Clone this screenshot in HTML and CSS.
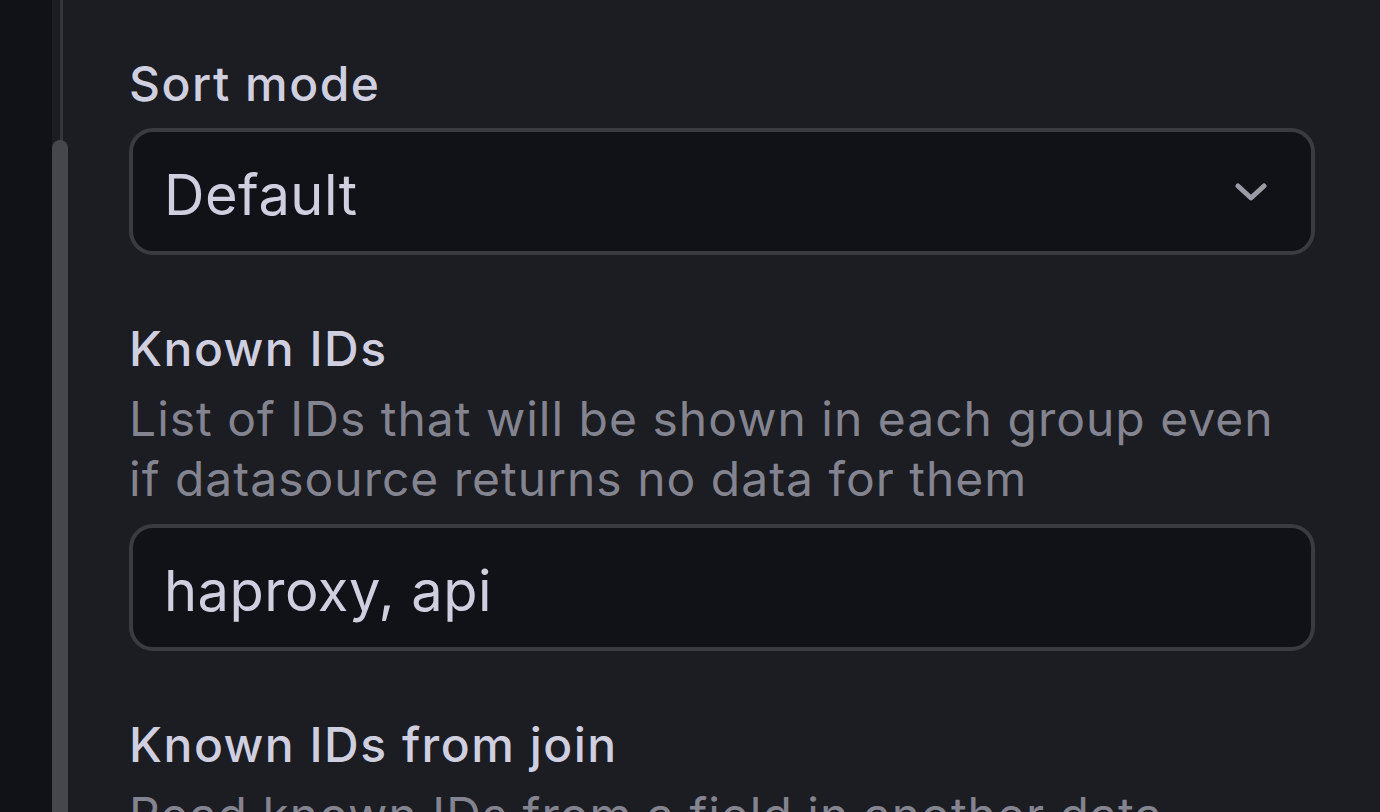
FILE: index.html
```html
<!DOCTYPE html>
<html>
<head>
<meta charset="utf-8">
<link rel="stylesheet" href="styles.css">
</head>
<body>
<div class="app">
  <div class="side"></div>
  <div class="scroll">
    <div class="track"></div>
    <div class="thumb"></div>
  </div>
  <div class="content">
    <div class="field">
      <div class="label">Sort mode</div>
      <div class="input select">
        <span class="value">Default</span>
        <svg class="chev" width="32" height="20" viewBox="0 0 32 20"><path d="M3 4 L16 16 L29 4" fill="none" stroke="#9a9ba5" stroke-width="5" stroke-linecap="round" stroke-linejoin="round"/></svg>
      </div>
    </div>
    <div class="field">
      <div class="label">Known IDs</div>
      <div class="desc">List of IDs that will be shown in each group even if datasource returns no data for them</div>
      <div class="input">
        <span class="value">haproxy, api</span>
      </div>
    </div>
    <div class="field">
      <div class="label">Known IDs from join</div>
      <div class="desc">Read known IDs from a field in another data frame</div>
    </div>
  </div>
</div>
</body>
</html>
```
FILE: styles.css
```css
html, body {
  margin: 0;
  padding: 0;
  width: 1380px;
  height: 812px;
  overflow: hidden;
  background: #1b1d22;
  font-family: Inter, "Noto Sans", sans-serif;
}
.app {
  display: flex;
  height: 812px;
  overflow: hidden;
}
.side {
  width: 52px;
  flex: none;
  background: #111217;
}
.scroll {
  width: 16px;
  flex: none;
  position: relative;
  background: #1b1d22;
}
.track {
  position: absolute;
  left: 8px;
  top: 0;
  width: 3px;
  height: 160px;
  background: #34363c;
}
.thumb {
  position: absolute;
  left: 0;
  top: 140px;
  width: 16px;
  bottom: 0;
  border-radius: 8px 8px 0 0;
  background: #46474d;
}
.content {
  flex: 1;
  padding: 54px 65px 0 61px;
  overflow: hidden;
}
.field {
  margin-bottom: 64px;
}
.label {
  font-size: 48px;
  line-height: 60px;
  font-weight: 450;
  color: #cfcfe0;
  letter-spacing: 1.5px;
  margin-bottom: 14px;
}
.desc {
  font-size: 48px;
  line-height: 60px;
  font-weight: 400;
  color: rgba(204, 204, 220, 0.6);
  letter-spacing: 1px;
  margin-top: -4px;
  margin-bottom: 15px;
}
.input {
  box-sizing: border-box;
  height: 127px;
  border: 4px solid #3a3b41;
  border-radius: 24px;
  background: #111217;
  display: flex;
  align-items: center;
  padding: 6px 44px 0 31px;
}
.value {
  font-size: 56px;
  color: #cfcfe0;
  flex: 1;
  letter-spacing: 0.5px;
}
.chev {
  flex: none;
  margin-top: -6px;
}
```
